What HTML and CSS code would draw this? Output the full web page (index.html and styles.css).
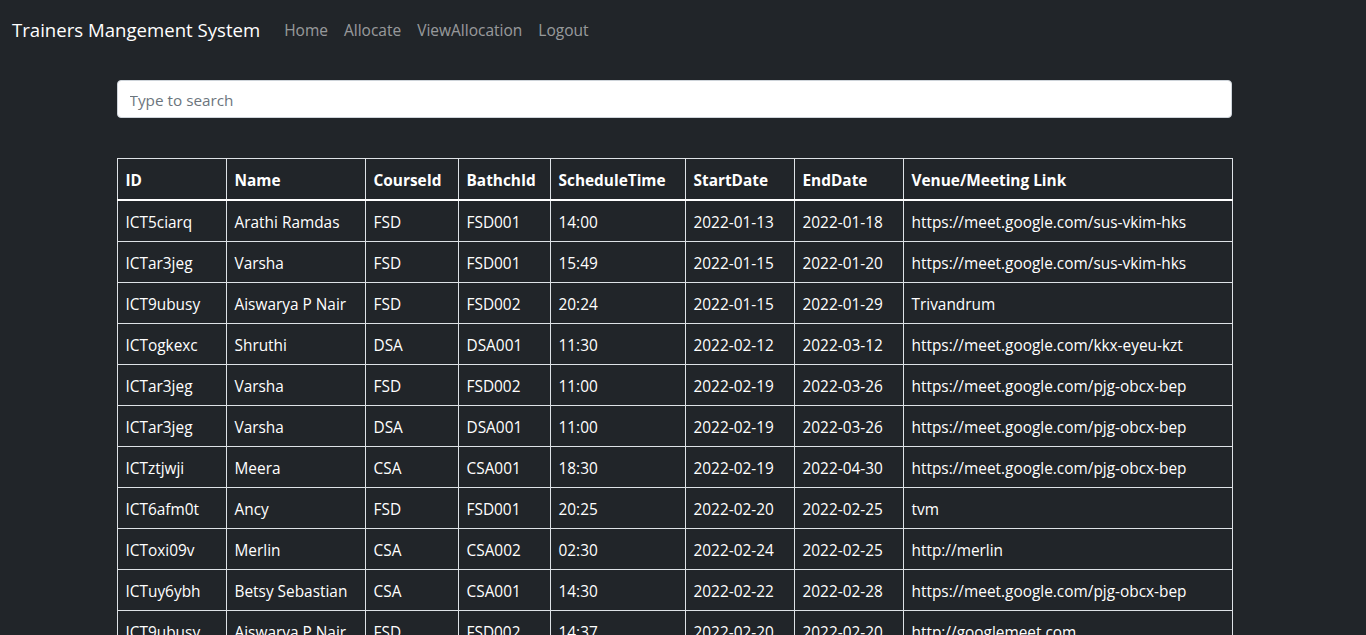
FILE: index.html
```html
<!DOCTYPE html>
<html lang="en">
<head>
<meta charset="utf-8">
<title>Trainers Mangement System</title>
<link rel="stylesheet" href="styles.css">
</head>
<body>
<nav class="navbar">
  <a class="brand" href="#">Trainers Mangement System</a>
  <ul class="nav">
    <li><a href="#">Home</a></li>
    <li><a href="#">Allocate</a></li>
    <li><a href="#">ViewAllocation</a></li>
    <li><a href="#">Logout</a></li>
  </ul>
</nav>
<main class="container">
  <input class="search" type="text" placeholder="Type to search">
  <table class="grid">
    <colgroup>
      <col class="c-id"><col class="c-name"><col class="c-course"><col class="c-batch"><col class="c-time"><col class="c-date"><col class="c-date"><col class="c-venue">
    </colgroup>
    <thead>
      <tr><th>ID</th><th>Name</th><th>CourseId</th><th>BathchId</th><th>ScheduleTime</th><th>StartDate</th><th>EndDate</th><th>Venue/Meeting Link</th></tr>
    </thead>
    <tbody>
      <tr><td>ICT5ciarq</td><td>Arathi Ramdas</td><td>FSD</td><td>FSD001</td><td>14:00</td><td>2022-01-13</td><td>2022-01-18</td><td>https://meet.google.com/sus-vkim-hks</td></tr>
      <tr><td>ICTar3jeg</td><td>Varsha</td><td>FSD</td><td>FSD001</td><td>15:49</td><td>2022-01-15</td><td>2022-01-20</td><td>https://meet.google.com/sus-vkim-hks</td></tr>
      <tr><td>ICT9ubusy</td><td>Aiswarya P Nair</td><td>FSD</td><td>FSD002</td><td>20:24</td><td>2022-01-15</td><td>2022-01-29</td><td>Trivandrum</td></tr>
      <tr><td>ICTogkexc</td><td>Shruthi</td><td>DSA</td><td>DSA001</td><td>11:30</td><td>2022-02-12</td><td>2022-03-12</td><td>https://meet.google.com/kkx-eyeu-kzt</td></tr>
      <tr><td>ICTar3jeg</td><td>Varsha</td><td>FSD</td><td>FSD002</td><td>11:00</td><td>2022-02-19</td><td>2022-03-26</td><td>https://meet.google.com/pjg-obcx-bep</td></tr>
      <tr><td>ICTar3jeg</td><td>Varsha</td><td>DSA</td><td>DSA001</td><td>11:00</td><td>2022-02-19</td><td>2022-03-26</td><td>https://meet.google.com/pjg-obcx-bep</td></tr>
      <tr><td>ICTztjwji</td><td>Meera</td><td>CSA</td><td>CSA001</td><td>18:30</td><td>2022-02-19</td><td>2022-04-30</td><td>https://meet.google.com/pjg-obcx-bep</td></tr>
      <tr><td>ICT6afm0t</td><td>Ancy</td><td>FSD</td><td>FSD001</td><td>20:25</td><td>2022-02-20</td><td>2022-02-25</td><td>tvm</td></tr>
      <tr><td>ICToxi09v</td><td>Merlin</td><td>CSA</td><td>CSA002</td><td>02:30</td><td>2022-02-24</td><td>2022-02-25</td><td>http://merlin</td></tr>
      <tr><td>ICTuy6ybh</td><td>Betsy Sebastian</td><td>CSA</td><td>CSA001</td><td>14:30</td><td>2022-02-22</td><td>2022-02-28</td><td>https://meet.google.com/pjg-obcx-bep</td></tr>
      <tr><td>ICT9ubusy</td><td>Aiswarya P Nair</td><td>FSD</td><td>FSD002</td><td>14:37</td><td>2022-02-20</td><td>2022-02-20</td><td>http://googlemeet.com</td></tr>
    </tbody>
  </table>
</main>
</body>
</html>
```
FILE: styles.css
```css
* { box-sizing: border-box; }
html, body {
  margin: 0;
  background: #212529;
  color: #fff;
  font-family: "Open Sans", "Noto Sans", sans-serif;
  font-size: 16px;
  line-height: 24px;
}
.navbar {
  display: flex;
  align-items: center;
  padding: 8px 12px;
  height: 60px;
}
.brand {
  color: #fff;
  text-decoration: none;
  font-size: 18.6px;
  line-height: 30px;
  margin-right: 16px;
}
.nav {
  display: flex;
  list-style: none;
  margin: 0;
  padding: 0;
}
.nav a {
  display: block;
  padding: 8px;
  color: rgba(255,255,255,0.55);
  text-decoration: none;
  font-size: 15.5px;
}
.container {
  width: 1139px;
  margin-left: calc((100% - 1157px) / 2);
  padding: 20px 12px 0;
}
.search {
  display: block;
  width: 100%;
  height: 38px;
  padding: 7px 12px 5px;
  font-family: inherit;
  font-size: 15.3px;
  color: #212529;
  background: #fff;
  border: 1px solid #ced4da;
  border-radius: 4px;
  margin-bottom: 40px;
}
.search::placeholder { color: #6c757d; }
.grid {
  width: 100%;
  table-layout: fixed;
  border-collapse: collapse;
  font-size: 15.4px;
}
.c-id { width: 109px; }
.c-name { width: 139px; }
.c-course { width: 93px; }
.c-batch { width: 92px; }
.c-time { width: 135px; }
.c-date { width: 109px; }
.c-venue { width: 329px; }
.grid th, .grid td {
  border: 1px solid #dee2e6;
  padding: 10px 8px 6px;
  text-align: left;
  vertical-align: top;
  white-space: nowrap;
  overflow: hidden;
  height: 41px;
}
.grid th { font-weight: 700; }
.grid thead th { border-bottom: 2px solid #fff; }
```
